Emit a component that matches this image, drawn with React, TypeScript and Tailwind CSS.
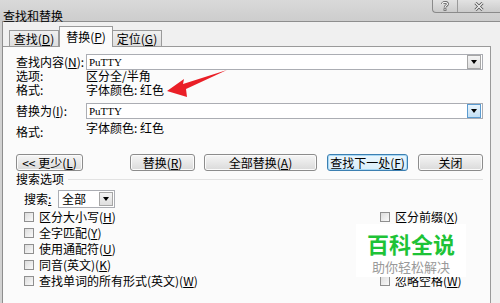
import React from "react";

const F = "font-['Noto_Sans_CJK_SC',sans-serif]";

function Tri() {
  return (
    <span className="inline-block w-0 h-0 border-l-[3px] border-r-[3px] border-t-[4px] border-l-transparent border-r-transparent border-t-black" />
  );
}

function DropBtn({ hl }: { hl?: boolean }) {
  return (
    <div
      className={
        "w-[14px] h-[14px] mr-px flex items-center justify-center border " +
        (hl
          ? "border-[#5b9bd0] bg-gradient-to-b from-[#e8f4fc] to-[#c4e0f5]"
          : "border-[#a6a6a6] bg-gradient-to-b from-[#f4f4f4] to-[#dedede]")
      }
    >
      <Tri />
    </div>
  );
}

function Field({ hl }: { hl?: boolean }) {
  return (
    <div className="flex-1 h-[16px] border border-[#abadb3] bg-white flex items-center">
      <span className="flex-1 pl-[2px] font-['Liberation_Serif',serif] text-[11px] leading-[14px] text-black">
        PuTTY
      </span>
      <DropBtn hl={hl} />
    </div>
  );
}

function Btn({ w, ml, children, focus }: { w: string; ml?: string; children: React.ReactNode; focus?: boolean }) {
  return (
    <div
      className={
        w +
        " " +
        (ml ?? "") +
        " h-[17px] rounded-[3px] flex items-center justify-center text-[12px] leading-[14px] text-black border " +
        (focus
          ? "border-[#3c7fb1] bg-gradient-to-b from-[#eaf6fd] to-[#d9eefa] shadow-[inset_0_0_0_1px_#a7d8f5]"
          : "border-[#8c8c8c] bg-gradient-to-b from-[#f6f6f6] to-[#dadada] shadow-[inset_0_0_0_1px_#fbfbfb]")
      }
    >
      {children}
    </div>
  );
}

function Check({ children }: { children?: React.ReactNode }) {
  return (
    <div className="h-[16px] flex items-center">
      <div className="w-[10px] h-[10px] border border-[#8f8f8f] bg-gradient-to-br from-[#dcdcdc] to-[#fafafa]" />
      <span className="ml-[5px] text-[12px] leading-[14px] text-black whitespace-nowrap">{children}</span>
    </div>
  );
}

export default function App() {
  return (
    <div className={"relative w-[500px] h-[303px] overflow-hidden bg-[#d2d2d2] " + F}>
      {/* title bar */}
      <div className="h-[21px] pl-[3px] pt-[2px] bg-gradient-to-b from-[#d9d9d9] to-[#cdcdcd]">
        <span className="text-[12px] leading-[13px] text-black">查找和替换</span>
      </div>
      <div className="absolute left-[432px] top-0 flex h-[13px] w-[68px] rounded-bl-[4px] border-l border-b border-[#8a8a8a] bg-gradient-to-b from-[#e2e2e2] to-[#cbcbcb]">
        <div className="w-[25px] h-[12px] flex items-center justify-center border-r border-[#9a9a9a]">
          <svg width="8" height="10" viewBox="0 0 8 10">
            <path d="M1.5 3 C1.5 0.8 6.5 0.8 6.5 3 C6.5 4.6 4 4.6 4 6.5" fill="none" stroke="#555" strokeWidth="2.6" />
            <path d="M1.5 3 C1.5 0.8 6.5 0.8 6.5 3 C6.5 4.6 4 4.6 4 6.5" fill="none" stroke="#f4f4f4" strokeWidth="1.2" />
            <rect x="2.6" y="7.4" width="2.8" height="2.4" fill="#555" />
            <rect x="3.4" y="8" width="1.2" height="1.2" fill="#f4f4f4" />
          </svg>
        </div>
        <div className="flex-1 h-[12px] flex items-center justify-center">
          <svg width="10" height="9" viewBox="0 0 10 9">
            <path d="M1.5 1 L8.5 8 M8.5 1 L1.5 8" stroke="#555" strokeWidth="3" />
            <path d="M1.5 1 L8.5 8 M8.5 1 L1.5 8" stroke="#f4f4f4" strokeWidth="1.3" />
          </svg>
        </div>
      </div>

      {/* body */}
      <div className="ml-[2px] h-[282px] border-l border-t border-[#8e8e8e] bg-[#f0f0f0]">
        {/* tabs */}
        <div className="flex items-end h-[24px] pl-[6px]">
          <div className="w-[50px] h-[16px] border border-b-0 border-[#9a9a9a] bg-gradient-to-b from-[#f0f0f0] to-[#dedede] flex items-center justify-center text-[12px] leading-[14px] text-black">
            查找(<u>D</u>)
          </div>
          <div className="relative z-10 -mb-px w-[54px] h-[21px] border border-b-0 border-[#9a9a9a] bg-[#fbfbfb] flex items-center justify-center text-[12px] leading-[14px] text-black">
            替换(<u>P</u>)
          </div>
          <div className="w-[49px] h-[16px] border border-b-0 border-l-0 border-[#9a9a9a] bg-gradient-to-b from-[#f0f0f0] to-[#dedede] flex items-center justify-center text-[12px] leading-[14px] text-black">
            定位(<u>G</u>)
          </div>
        </div>

        {/* panel */}
        <div className="w-[488px] h-[260px] border-t border-r border-[#9a9a9a] bg-[#fbfbfb] pl-[13px] pr-[7px] pt-[7px] text-[12px] leading-[12px] text-black">
          <div className="flex items-center h-[16px]">
            <div className="w-[70px] whitespace-nowrap">
              查找内容(<u>N</u>):
            </div>
            <Field />
          </div>
          <div className="flex h-[14px] -mt-px items-center leading-[14px]">
            <div className="w-[70px]">选项:</div>
            <div>区分全/半角</div>
          </div>
          <div className="flex h-[14px] items-center leading-[14px]">
            <div className="w-[70px]">格式:</div>
            <div>字体颜色: 红色</div>
          </div>
          <div className="flex items-center h-[16px] mt-[6px]">
            <div className="w-[70px] whitespace-nowrap">
              替换为(<u>I</u>):
            </div>
            <Field hl />
          </div>
          <div className="flex h-[20px] mt-px">
            <div className="w-[70px] self-end pb-[2px]">格式:</div>
            <div className="pt-[2px]">字体颜色: 红色</div>
          </div>

          {/* buttons */}
          <div className="flex mt-[14px]">
            <Btn w="w-[67px]">
              &lt;&lt; 更少(<u>L</u>)
            </Btn>
            <Btn w="w-[65px]" ml="ml-[47px]">
              替换(<u>R</u>)
            </Btn>
            <Btn w="w-[113px]" ml="ml-[9px]">
              全部替换(<u>A</u>)
            </Btn>
            <Btn w="w-[81px]" ml="ml-[10px]" focus>
              查找下一处(<u>F</u>)
            </Btn>
            <Btn w="w-[65px]" ml="ml-[10px]">
              关闭
            </Btn>
          </div>

          {/* search options */}
          <div className="flex items-center h-[12px] mt-[2px]">
            <span>搜索选项</span>
            <div className="flex-1 h-px bg-[#e2e2e2] ml-[4px]" />
          </div>
          <div className="flex items-center h-[18px] mt-[5px] pl-[8px]">
            <div className="w-[34px]">
              搜索<u>:</u>
            </div>
            <div className="w-[57px] h-[18px] border border-[#abadb3] bg-white flex items-center">
              <span className="flex-1 pl-[3px]">全部</span>
              <DropBtn />
            </div>
          </div>
          <div className="flex mt-px">
            <div className="w-[364px] pl-[8px] flex flex-col">
              <Check>区分大小写(<u>H</u>)</Check>
              <Check>全字匹配(<u>Y</u>)</Check>
              <Check>使用通配符(<u>U</u>)</Check>
              <Check>同音(英文)(<u>K</u>)</Check>
              <Check>查找单词的所有形式(英文)(<u>W</u>)</Check>
            </div>
            <div className="flex flex-col">
              <Check>区分前缀(<u>X</u>)</Check>
              <div className="h-[48px]" />
              <Check>忽略空格(<u>W</u>)</Check>
            </div>
          </div>
        </div>
      </div>

      {/* watermark */}
      <div className="absolute left-[356px] top-[224px] w-[110px] h-[53px] bg-white flex flex-col items-center">
        <div className="text-[22px] leading-[26px] font-bold text-[#1ec337] mt-[6px]">百科全说</div>
        <div className="text-[13px] leading-[14px] text-[#9a9a9a] mt-[4px]">助你轻松解决</div>
      </div>

      {/* red arrow */}
      <svg className="absolute left-0 top-0" width="500" height="303" viewBox="0 0 500 303">
        <polygon points="167,91 184,79 183,84 227,70 186,89 187,97" fill="#ea1f27" />
      </svg>
    </div>
  );
}
